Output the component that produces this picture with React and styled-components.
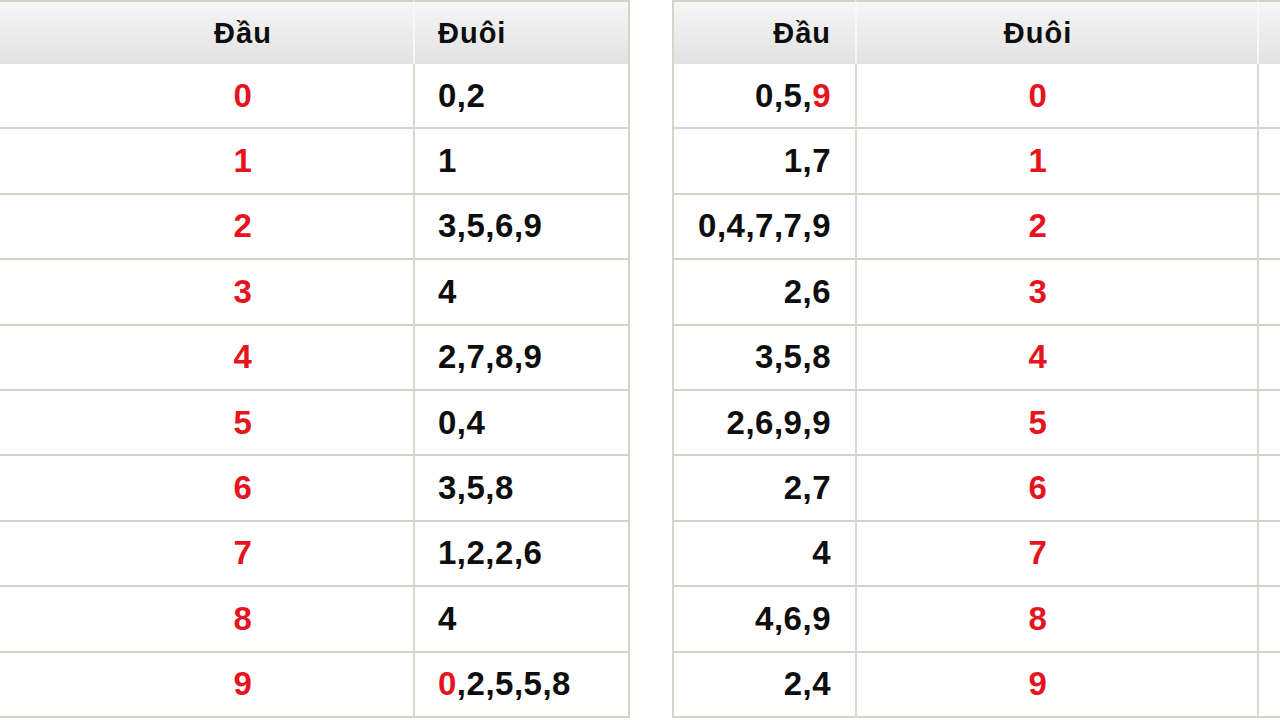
import React from "react";
import styled, { createGlobalStyle } from "styled-components";

const leftRows = [
   { head: "0", tail: [["0,2"]] },
   { head: "1", tail: [["1"]] },
   { head: "2", tail: [["3,5,6,9"]] },
   { head: "3", tail: [["4"]] },
   { head: "4", tail: [["2,7,8,9"]] },
   { head: "5", tail: [["0,4"]] },
   { head: "6", tail: [["3,5,8"]] },
   { head: "7", tail: [["1,2,2,6"]] },
   { head: "8", tail: [["4"]] },
   { head: "9", tail: [["0", true], [",2,5,5,8"]] },
];

const rightRows = [
   { head: [["0,5,"], ["9", true]], tail: "0" },
   { head: [["1,7"]], tail: "1" },
   { head: [["0,4,7,7,9"]], tail: "2" },
   { head: [["2,6"]], tail: "3" },
   { head: [["3,5,8"]], tail: "4" },
   { head: [["2,6,9,9"]], tail: "5" },
   { head: [["2,7"]], tail: "6" },
   { head: [["4"]], tail: "7" },
   { head: [["4,6,9"]], tail: "8" },
   { head: [["2,4"]], tail: "9" },
];

const GlobalStyle = createGlobalStyle`
   html, body {
      margin: 0;
      padding: 0;
      background: #ffffff;
   }
   body {
      font-family: "Liberation Sans", Arial, sans-serif;
      overflow: hidden;
   }
`;

const Page = styled.div`
   display: flex;
   width: 1280px;
   height: 720px;
   overflow: hidden;
   gap: 42px;
`;

const Board = styled.div`
   display: grid;
   grid-template-columns: ${(p) => p.$cols};
   grid-auto-rows: 65.4px;
   grid-template-rows: 64px;
   flex: ${(p) => (p.$grow ? "1" : "none")};
   border-right: ${(p) => (p.$edge ? "2px solid #d8d4cd" : "none")};
   border-left: ${(p) => (p.$open ? "2px solid #d8d4cd" : "none")};
   align-self: flex-start;
`;

const HeadCell = styled.div`
   box-sizing: border-box;
   display: flex;
   align-items: center;
   justify-content: ${(p) => p.$justify || "center"};
   padding: ${(p) => p.$pad || "0"};
   border-top: 2px solid #d6d2ca;
   border-left: ${(p) => (p.$sep ? "2px solid #f7f7f7" : "none")};
   background: linear-gradient(#f6f6f6, #e2e2e2);
   font-size: 29px;
   font-weight: bold;
   letter-spacing: 1px;
   color: #0e0e0e;
`;

const Cell = styled.div`
   box-sizing: border-box;
   display: flex;
   align-items: center;
   justify-content: ${(p) => p.$justify || "center"};
   padding: ${(p) => p.$pad || "0"};
   border-bottom: 2px solid #d6d2ca;
   border-left: ${(p) => (p.$sep ? "2px solid #dcd8d1" : "none")};
   font-size: 33px;
   font-weight: bold;
   letter-spacing: 0.5px;
   color: #0e0e0e;
`;

const Num = styled.span`
   color: ${(p) => (p.$red ? "#e5141e" : "#0e0e0e")};
`;

const Parts = ({ parts }) =>
   parts.map(([text, red], i) => (
      <Num key={i} $red={red}>
         {text}
      </Num>
   ));

const App = () => (
   <>
      <GlobalStyle />
      <Page>
         <Board $cols="413px 215px" $edge>
            <HeadCell $pad="0 0 0 73px">Đầu</HeadCell>
            <HeadCell $sep $justify="flex-start" $pad="0 0 0 23px">
               Đuôi
            </HeadCell>
            {leftRows.map((row) => (
               <React.Fragment key={row.head}>
                  <Cell $pad="0 0 0 73px">
                     <Num $red>{row.head}</Num>
                  </Cell>
                  <Cell $sep $justify="flex-start" $pad="0 0 0 23px">
                     <Parts parts={row.tail} />
                  </Cell>
               </React.Fragment>
            ))}
         </Board>
         <Board $cols="181px 402px 1fr" $grow $open>
            <HeadCell $justify="flex-end" $pad="0 24px 0 0">
               Đầu
            </HeadCell>
            <HeadCell $sep $pad="0 38px 0 0">
               Đuôi
            </HeadCell>
            <HeadCell $sep />
            {rightRows.map((row) => (
               <React.Fragment key={row.tail}>
                  <Cell $justify="flex-end" $pad="0 24px 0 0">
                     <Parts parts={row.head} />
                  </Cell>
                  <Cell $sep $pad="0 38px 0 0">
                     <Num $red>{row.tail}</Num>
                  </Cell>
                  <Cell $sep />
               </React.Fragment>
            ))}
         </Board>
      </Page>
   </>
);

export default App;
